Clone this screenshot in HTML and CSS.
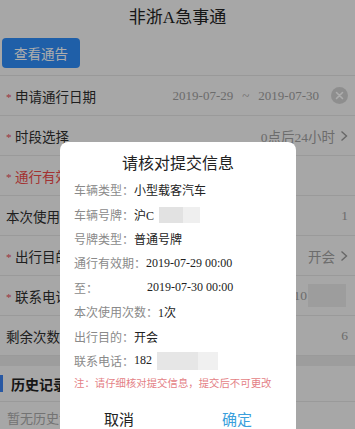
FILE: index.html
```html
<!DOCTYPE html>
<html lang="zh-CN">
<head>
<meta charset="utf-8">
<title>非浙A急事通</title>
<link rel="stylesheet" href="styles.css">
</head>
<body>
<div class="page">
  <header class="title">非浙A急事通</header>
  <div class="toolbar"><button class="notice-btn">查看通告</button></div>
  <div class="form">
    <div class="row">
      <span class="label"><i class="req">*</i>申请通行日期</span>
      <span class="value date">2019-07-29<span class="tilde">~</span>2019-07-30
        <svg class="clear" width="17" height="17" viewBox="0 0 17 17"><circle cx="8.5" cy="8.5" r="8.5" fill="#d2d2d2"/><path d="M5.5 5.5l6 6M11.5 5.5l-6 6" stroke="#fff" stroke-width="1.6" stroke-linecap="round"/></svg>
      </span>
    </div>
    <div class="row">
      <span class="label"><i class="req">*</i>时段选择</span>
      <span class="value">0点后24小时<svg class="chev" width="8" height="12" viewBox="0 0 8 12"><path d="M1.5 1.5l5 4.5-5 4.5" fill="none" stroke="#999" stroke-width="1.4"/></svg></span>
    </div>
    <div class="row">
      <span class="label red"><i class="req">*</i>通行有效期</span>
      <span class="value"></span>
    </div>
    <div class="row">
      <span class="label">本次使用次数</span>
      <span class="value">1</span>
    </div>
    <div class="row">
      <span class="label"><i class="req">*</i>出行目的</span>
      <span class="value">开会<svg class="chev" width="8" height="12" viewBox="0 0 8 12"><path d="M1.5 1.5l5 4.5-5 4.5" fill="none" stroke="#999" stroke-width="1.4"/></svg></span>
    </div>
    <div class="row">
      <span class="label"><i class="req">*</i>联系电话</span>
      <span class="value phone">'10<span class="bg-mask"></span></span>
    </div>
    <div class="row">
      <span class="label">剩余次数</span>
      <span class="value">6</span>
    </div>
  </div>
  <div class="gap"></div>
  <div class="history-head"><span class="bar"></span>历史记录</div>
  <div class="history-empty">暂无历史记录</div>
</div>

<div class="overlay"></div>

<div class="dialog">
  <div class="dialog-title">请核对提交信息</div>
  <div class="info">
    <div class="line"><span class="k">车辆类型：</span><span class="v">小型载客汽车</span></div>
    <div class="line"><span class="k">车辆号牌：</span><span class="v">沪C<span class="blur plate"></span></span></div>
    <div class="line"><span class="k">号牌类型：</span><span class="v">普通号牌</span></div>
    <div class="line"><span class="k">通行有效期：</span><span class="v">2019-07-29 00:00</span></div>
    <div class="line to"><span class="k">至：</span><span class="v">2019-07-30 00:00</span></div>
    <div class="line"><span class="k">本次使用次数：</span><span class="v">1次</span></div>
    <div class="line"><span class="k">出行目的：</span><span class="v">开会</span></div>
    <div class="line"><span class="k">联系电话：</span><span class="v">182<span class="blur tel"></span></span></div>
  </div>
  <div class="note">注：请仔细核对提交信息，提交后不可更改</div>
  <div class="actions">
    <button class="act cancel">取消</button>
    <button class="act ok">确定</button>
  </div>
</div>
</body>
</html>
```

FILE: styles.css
```css
* { box-sizing: border-box; }
html, body {
  margin: 0;
  padding: 0;
  width: 355px;
  height: 429px;
  overflow: hidden;
  background: #f6f6f6;
  font-family: "Liberation Serif", "Noto Sans CJK SC", serif;
  color: #2b2b2b;
}
.page { width: 355px; }

.title {
  height: 36px;
  line-height: 36px;
  text-align: center;
  font-size: 17px;
  color: #222;
}
.toolbar {
  padding: 2px 0 7px 2px;
  border-bottom: 1px solid #e2e2e2;
}
.notice-btn {
  display: block;
  width: 78px;
  height: 30px;
  border: 0;
  border-radius: 4px;
  background: #2f8cf8;
  color: #fff;
  font-family: "Noto Sans CJK SC", sans-serif;
  font-size: 13.5px;
  padding: 0;
}

.form { background: #f6f6f6; }
.row {
  height: 40px;
  display: flex;
  align-items: center;
  justify-content: space-between;
  padding: 0 7px 0 6px;
  border-bottom: 1px solid #e4e4e4;
  font-size: 13.5px;
}
.label { color: #2e2e2e; display: flex; align-items: center; }
.label.red { color: #f04a4a; }
.req {
  font-style: normal;
  color: #e84a5a;
  font-size: 11px;
  width: 8px;
  margin-right: 1px;
  position: relative;
  top: 1px;
}
.value {
  color: #a0a0a0;
  display: flex;
  align-items: center;
}
.date { font-size: 13px; }
.tilde { margin: 0 9px; }
.clear { margin-left: 12px; }
.chev { margin-left: 5px; }
.phone { margin-right: 2px; }
.bg-mask {
  display: inline-block;
  width: 38px;
  height: 23px;
  background: #e8e8e8;
  margin-left: 1px;
}

.gap { height: 10px; background: #e8e8e8; }
.history-head {
  height: 36px;
  display: flex;
  align-items: center;
  font-size: 14px;
  font-weight: bold;
  color: #222;
  border-bottom: 1px solid #e4e4e4;
  font-family: "Noto Sans CJK SC", sans-serif;
}
.bar {
  width: 3px;
  height: 17px;
  background: #3b82f0;
  margin-right: 8px;
}
.history-empty {
  padding: 6px 7px;
  font-size: 13px;
  color: #aaa;
}

.overlay {
  position: fixed;
  inset: 0;
  background: rgba(0, 0, 0, 0.32);
}

.dialog {
  position: absolute;
  left: 60px;
  top: 142px;
  width: 236px;
  background: #fff;
  border-radius: 8px;
  padding-top: 10px;
}
.dialog-title {
  height: 24px;
  line-height: 24px;
  text-align: center;
  font-size: 16px;
  color: #222;
  margin-bottom: 2px;
}
.info { padding-left: 14px; }
.line {
  height: 24.4px;
  display: flex;
  align-items: center;
  font-size: 12px;
}
.k { color: #8a8a8a; }
.v { color: #222; display: flex; align-items: center; }
.to .v { margin-left: 49px; }
.blur { display: inline-block; }
.plate {
  width: 41px;
  height: 16px;
  margin-left: 5px;
  background: linear-gradient(90deg, #e2e2e2 0 58%, #efefef 58% 100%);
}
.tel {
  width: 61px;
  height: 18px;
  margin-left: 5px;
  background: linear-gradient(90deg, #e6e6e6 0 68%, #f0f0f0 68% 100%);
}
.note {
  height: 20px;
  line-height: 20px;
  padding-left: 14px;
  font-size: 10.4px;
  color: #e47f86;
  font-family: "Noto Sans CJK SC", sans-serif;
}
.actions {
  display: flex;
  margin-top: 5px;
}
.act {
  flex: 1;
  height: 40px;
  border: 0;
  background: transparent;
  font-family: "Noto Sans CJK SC", sans-serif;
  font-size: 15px;
  padding: 0;
}
.cancel { color: #222; }
.ok { color: #3a9fdc; }
```
